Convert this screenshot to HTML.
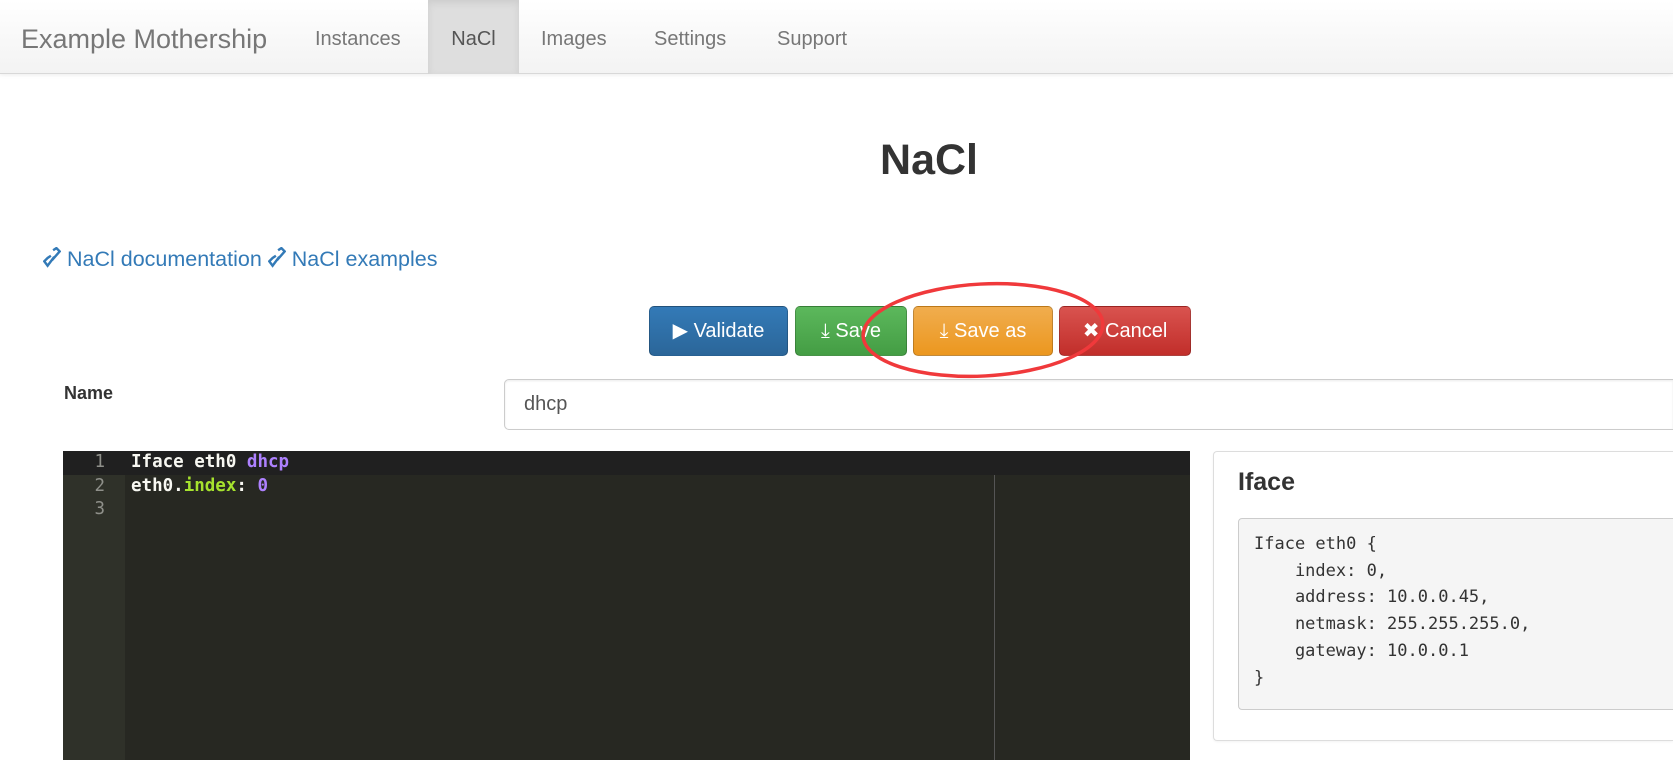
<!DOCTYPE html>
<html style="overflow:hidden;height:760px"><head><meta charset="utf-8"><style>
*{box-sizing:border-box;margin:0;padding:0}
body{width:1673px;height:760px;overflow:hidden;background:#fff;font-family:"Liberation Sans",sans-serif;color:#333;position:relative}
.nav{position:absolute;left:0;top:0;width:1673px;height:74px;background:linear-gradient(#fff,#f3f3f3);border-bottom:1px solid #d8d8d8;box-shadow:0 1px 4px rgba(0,0,0,.08)}
.nav span{position:absolute;top:2px;line-height:74px;font-size:20px;color:#777}
.brand{left:21px;font-size:27px!important}
.active{background:#dedede;top:0!important;height:74px;padding-top:2px;box-shadow:inset 0 3px 8px rgba(0,0,0,.08);color:#555!important;text-align:center}
h1{position:absolute;left:0;width:1858px;text-align:center;top:136px;font-size:43px;font-weight:bold;color:#333}
.links{position:absolute;left:43px;top:247px;font-size:21.5px;color:#337ab7}
.btn{position:absolute;top:306px;height:50px;border-radius:5px;color:#fff;font-size:20px;line-height:48px;text-align:center;border:1px solid rgba(0,0,0,.2)}
.lbl{position:absolute;left:64px;top:383px;font-weight:bold;font-size:18px}
.inp{position:absolute;left:504px;top:379px;width:1169px;height:51px;border:1px solid #ccc;border-right:none;border-radius:5px 0 0 5px;box-shadow:inset 0 1px 2px rgba(0,0,0,.08);font-size:20px;padding-left:19px;line-height:49px;color:#555}
.ed{position:absolute;left:63px;top:451px;width:1127px;height:309px;overflow:hidden;background:#272822;font-family:"DejaVu Sans Mono","Liberation Mono",monospace;font-size:17.5px;color:#f8f8f2;font-weight:bold}
.gut{position:absolute;left:0;top:0;width:62px;height:100%;background:#2f3129;color:#8f908a;font-weight:normal}
.ln{height:23.5px;line-height:23.5px}
.gut .ln{text-align:right;padding-right:20px}
.code{position:absolute;left:68px;top:0}
.hl{position:absolute;left:0;top:0;width:100%;height:24px;background:#202020}
.panel{position:absolute;left:1213px;top:451px;width:460px;height:290px;border:1px solid #ddd;border-right:none;border-radius:4px 0 0 4px;box-shadow:0 1px 2px rgba(0,0,0,.05);overflow:hidden}
.panel h3{position:absolute;left:24px;top:16px;font-size:25px;font-weight:bold;color:#333}
pre{position:absolute;left:24px;top:66px;width:480px;height:192px;background:#f5f5f5;border:1px solid #ccc;border-radius:4px;font-family:"DejaVu Sans Mono","Liberation Mono",monospace;font-size:17px;line-height:26.7px;padding:12px 15px;color:#333}
</style></head><body>
<div class="nav">
<span class="brand">Example Mothership</span>
<span style="left:315px">Instances</span>
<span class="active" style="left:428px;width:91px">NaCl</span>
<span style="left:541px">Images</span>
<span style="left:654px">Settings</span>
<span style="left:777px">Support</span>
</div>
<h1>NaCl</h1>
<div class="links"><svg width="18" height="22" viewBox="0 0 16 20" style="vertical-align:-3px"><path d="M9 3 L12 1 L15 4 L8 12 M7 8 L4 10 L1 13 L4 17 L10 9" stroke="#337ab7" stroke-width="2.2" fill="none"/></svg> NaCl documentation <svg width="18" height="22" viewBox="0 0 16 20" style="vertical-align:-3px"><path d="M9 3 L12 1 L15 4 L8 12 M7 8 L4 10 L1 13 L4 17 L10 9" stroke="#337ab7" stroke-width="2.2" fill="none"/></svg> NaCl examples</div>
<div class="btn" style="left:649px;width:139px;background:linear-gradient(#337ab7,#2b6699)">▶ Validate</div>
<div class="btn" style="left:795px;width:112px;background:linear-gradient(#5cb85c,#449d44)">⤓ Save</div>
<div class="btn" style="left:913px;width:140px;background:linear-gradient(#f0ad4e,#ec971f)">⤓ Save as</div>
<div class="btn" style="left:1059px;width:132px;background:linear-gradient(#d9534f,#c12e2a)">✖ Cancel</div>
<svg style="position:absolute;left:0;top:0" width="1673" height="760"><ellipse cx="983" cy="330" rx="120" ry="46" transform="rotate(-3 983 330)" fill="none" stroke="#f0393b" stroke-width="3.5"/></svg>
<div class="lbl">Name</div>
<div class="inp">dhcp</div>
<div class="ed">
<div class="hl"></div>
<div class="gut"><div class="ln" style="background:#202020">1</div><div class="ln">2</div><div class="ln">3</div></div>
<div class="code"><div class="ln">Iface eth0 <span style="color:#ae81ff">dhcp</span></div><div class="ln">eth0.<span style="color:#a6e22e">index</span>: <span style="color:#ae81ff">0</span></div></div>
<div style="position:absolute;left:931px;top:24px;width:1px;height:285px;background:#555"></div>
</div>
<div class="panel"><h3>Iface</h3>
<pre>Iface eth0 {
    index: 0,
    address: 10.0.0.45,
    netmask: 255.255.255.0,
    gateway: 10.0.0.1
}</pre></div>
</body></html>
